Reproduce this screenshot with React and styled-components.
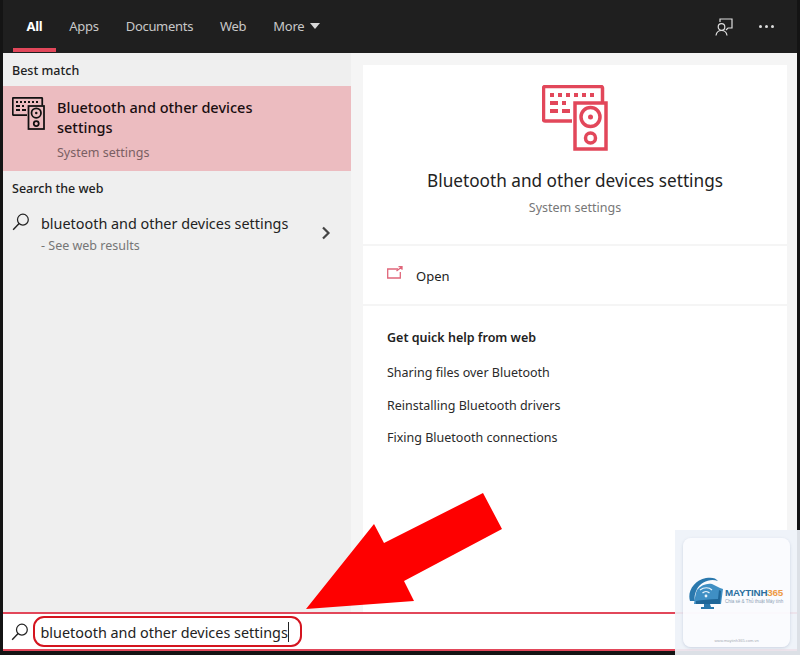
import React from 'react'
import styled, { createGlobalStyle } from 'styled-components'

const GlobalStyle = createGlobalStyle`
  html, body { margin: 0; padding: 0; background: #111; }
  body { font-family: "Noto Sans", "Open Sans", "Liberation Sans", sans-serif; }
`

const Frame = styled.div`
  position: relative;
  width: 800px;
  height: 655px;
  overflow: hidden;
  box-sizing: border-box;
  padding: 0 3px 4px 3px;
  background: #141414;
  display: flex;
  flex-direction: column;
`

const TopBar = styled.div`
  height: 53px;
  flex: none;
  background: #1f1f1f;
  display: flex;
  align-items: stretch;
  padding: 0 0 0 10px;
  color: #d0d0d0;
`

const Tab = styled.div`
  position: relative;
  display: flex;
  align-items: center;
  gap: 6px;
  padding: 0 13.5px 2px;
  font-size: 13px;
  letter-spacing: -0.3px;
  font-weight: ${p => (p.$active ? 700 : 400)};
  color: ${p => (p.$active ? '#fff' : '#c8c8c8')};
  box-sizing: border-box;
  &::after {
    content: "";
    display: ${p => (p.$active ? 'block' : 'none')};
    position: absolute;
    left: 0;
    right: 0;
    bottom: 1px;
    height: 4px;
    background: #e2475a;
  }
`

const Caret = styled.span`
  width: 0;
  height: 0;
  border-left: 5.5px solid transparent;
  border-right: 5.5px solid transparent;
  border-top: 6px solid #d8d8d8;
`

const TopActions = styled.div`
  margin-left: auto;
  display: flex;
  align-items: center;
  gap: 26px;
  padding-right: 23px;
`

const Dots = styled.div`
  display: flex;
  gap: 3px;
  span {
    width: 3px;
    height: 3px;
    border-radius: 50%;
    background: #dcdcdc;
  }
`

const Body = styled.div`
  flex: 1;
  min-height: 0;
  display: flex;
  background: #f5f5f5;
`

const LeftPanel = styled.div`
  width: 348px;
  flex: none;
  background: #efefef;
  color: #1a1a1a;
`

const GroupLabel = styled.div`
  font-size: 12.5px;
  font-weight: 500;
  line-height: 17px;
  color: #222;
  padding-left: 9px;
  padding-top: ${p => p.$top}px;
  padding-bottom: ${p => p.$bottom}px;
`

const BestMatch = styled.div`
  height: 85px;
  box-sizing: border-box;
  background: #ecbcc0;
  display: flex;
  padding: 11px 0 0 9px;
  gap: 12px;
`

const MatchText = styled.div`
  display: flex;
  flex-direction: column;
`

const MatchTitle = styled.div`
  font-size: 14.5px;
  font-weight: 500;
  line-height: 20px;
  color: #1a0e10;
  width: 230px;
`

const MatchSub = styled.div`
  font-size: 12.5px;
  line-height: 17px;
  margin-top: 7px;
  color: #7a5f63;
`

const WebRow = styled.div`
  display: flex;
  padding: 16px 0 0 9px;
  position: relative;
`

const WebText = styled.div`
  margin-left: 11px;
`

const WebTitle = styled.div`
  font-size: 14.4px;
  line-height: 21px;
  color: #222;
`

const WebSub = styled.div`
  font-size: 12.5px;
  line-height: 17px;
  margin-top: 3px;
  color: #767676;
`

const Chevron = styled.div`
  margin-left: auto;
  padding: 10px 20px 0 0;
`

const RightPanel = styled.div`
  flex: 1;
  margin: 12px 10px 0 12px;
  background: #fff;
  display: flex;
  flex-direction: column;
`

const HeroCard = styled.div`
  height: 181px;
  flex: none;
  box-sizing: border-box;
  padding-top: 20px;
  display: flex;
  flex-direction: column;
  align-items: center;
  border-bottom: 2px solid #f5f5f5;
`

const HeroTitle = styled.div`
  font-size: 17.2px;
  line-height: 24px;
  margin-top: 18px;
  color: #222;
`

const HeroSub = styled.div`
  font-size: 12.5px;
  line-height: 17px;
  margin-top: 6px;
  color: #777;
`

const OpenRow = styled.div`
  height: 60px;
  flex: none;
  box-sizing: border-box;
  display: flex;
  align-items: flex-start;
  gap: 13px;
  padding: 21px 0 0 24px;
  font-size: 13px;
  line-height: 18px;
  color: #222;
  border-bottom: 2px solid #f5f5f5;
  svg { margin-top: -1px; }
`

const HelpSection = styled.div`
  padding: 23px 0 0 24px;
  display: flex;
  flex-direction: column;
`

const HelpHead = styled.div`
  font-size: 12.5px;
  font-weight: 600;
  line-height: 17px;
  color: #222;
  margin-bottom: 18px;
`

const HelpLink = styled.div`
  font-size: 12.5px;
  line-height: 17px;
  color: #2a2a2a;
  margin-bottom: 15.5px;
`

const SearchBar = styled.div`
  height: 39px;
  flex: none;
  box-sizing: border-box;
  background: #fff;
  border-top: 2px solid #e2475a;
  border-bottom: 2px solid #e2475a;
  display: flex;
  align-items: center;
  padding-left: 8px;
  gap: 4px;
`

const QueryBox = styled.div`
  width: 269px;
  height: 31px;
  box-sizing: border-box;
  border: 2.5px solid #d4141f;
  border-radius: 11px;
  display: flex;
  align-items: center;
  padding: 1px 0 0 5.5px;
  font-size: 14.4px;
  color: #222;
`

const Cursor = styled.span`
  width: 1px;
  height: 20px;
  background: #222;
`

const Arrow = styled.svg`
  position: absolute;
  left: 0;
  top: 0;
  pointer-events: none;
`

const Watermark = styled.div`
  position: absolute;
  left: 675px;
  top: 530px;
  width: 125px;
  height: 125px;
  box-sizing: border-box;
  padding: 8px 10px 8px 8px;
  background: rgba(238, 242, 248, 0.92);
`

const WatermarkCard = styled.div`
  height: 100%;
  background: rgba(251, 252, 255, 0.85);
  border-radius: 8px;
  box-shadow: 0 1px 3px rgba(120, 135, 170, 0.3);
  display: flex;
  flex-direction: column;
  align-items: center;
  position: relative;
`

const LogoRow = styled.div`
  display: flex;
  align-items: center;
  gap: 2px;
  margin-top: 39px;
  margin-left: -2px;
`

const LogoText = styled.div`
  display: flex;
  flex-direction: column;
  margin-top: 5px;
  width: 58px;
`

const LogoName = styled.div`
  font-family: "Liberation Sans", sans-serif;
  font-size: 9.8px;
  font-weight: 700;
  line-height: 11px;
  color: #2a6f9e;
  letter-spacing: -0.2px;
  white-space: nowrap;
  span { color: #ee9a45; }
`

const LogoTag = styled.div`
  font-family: "Liberation Sans", sans-serif;
  font-size: 4.5px;
  line-height: 7px;
  color: #8aa0b4;
  white-space: nowrap;
`

const LogoUrl = styled.div`
  position: absolute;
  bottom: 4px;
  font-family: "Liberation Sans", sans-serif;
  font-size: 4px;
  color: #a8adb5;
`

const SearchGlass = ({ size = 19 }) => (
  <svg width={size} height={size} viewBox="0 0 19 19" fill="none" stroke="#222" strokeWidth="1.3">
    <circle cx="11.5" cy="7" r="5.7" />
    <path d="M7.5 11.2 1.2 17.8" strokeWidth="1.5" />
  </svg>
)

const DeviceGlyph = ({ color, sw }) => (
  <g fill="none" stroke={color} strokeWidth={sw}>
    <path d="M30 36H3a1.5 1.5 0 0 1-1.500-1.500V3A1.500 1.500 0 0 1 3 1.500h56a1.500 1.500 0 0 1 1.500 1.500v14" />
    <rect x="33" y="18" width="31" height="46" />
    <circle cx="48.500" cy="32" r="9.500" />
    <circle cx="48.500" cy="53" r="5" />
    <g fill={color} stroke="none">
      <circle cx="48.500" cy="32" r="2.500" />
      <rect x="8" y="8" width="4" height="4" />
      <rect x="16" y="8" width="4" height="4" />
      <rect x="24" y="8" width="4" height="4" />
      <rect x="32" y="8" width="4" height="4" />
      <rect x="40" y="8" width="4" height="4" />
      <rect x="48" y="8" width="4" height="4" />
      <rect x="8" y="16" width="8" height="4" />
      <rect x="20" y="16" width="4" height="4" />
      <rect x="8" y="24" width="8" height="4" />
      <rect x="20" y="24" width="8" height="4" />
    </g>
  </g>
)

export default function App() {
  return (
    <>
      <GlobalStyle />
      <Frame>
        <TopBar>
          <Tab $active>All</Tab>
          <Tab>Apps</Tab>
          <Tab>Documents</Tab>
          <Tab>Web</Tab>
          <Tab>More <Caret /></Tab>
          <TopActions>
            <svg width="18" height="18" viewBox="0 0 18 18" fill="none" stroke="#dedede" strokeWidth="1.2">
              <path d="M5 4V1h12v9h-4l-2 2" />
              <circle cx="6.500" cy="9" r="3.300" />
              <path d="M1 17.500c.5-3.500 2.500-5 5.500-5s5 1.500 5.500 5" />
            </svg>
            <Dots><span /><span /><span /></Dots>
          </TopActions>
        </TopBar>
        <Body>
          <LeftPanel>
            <GroupLabel $top={9} $bottom={7}>Best match</GroupLabel>
            <BestMatch>
              <svg width="33" height="33" viewBox="0 0 66 66">
                <DeviceGlyph color="#111" sw="3.500" />
              </svg>
              <MatchText>
                <MatchTitle>Bluetooth and other devices settings</MatchTitle>
                <MatchSub>System settings</MatchSub>
              </MatchText>
            </BestMatch>
            <GroupLabel $top={9} $bottom={0}>Search the web</GroupLabel>
            <WebRow>
              <SearchGlass size={18} />
              <WebText>
                <WebTitle>bluetooth and other devices settings</WebTitle>
                <WebSub>- See web results</WebSub>
              </WebText>
              <Chevron>
                <svg width="10" height="14" viewBox="0 0 10 14" fill="none" stroke="#444" strokeWidth="2.200">
                  <path d="M2 1.500 7.500 7 2 12.500" />
                </svg>
              </Chevron>
            </WebRow>
          </LeftPanel>
          <RightPanel>
            <HeroCard>
              <svg width="66" height="66" viewBox="0 0 66 66">
                <DeviceGlyph color="#e2475a" sw="3.500" />
              </svg>
              <HeroTitle>Bluetooth and other devices settings</HeroTitle>
              <HeroSub>System settings</HeroSub>
            </HeroCard>
            <OpenRow>
              <svg width="16" height="13" viewBox="0 0 16 13" fill="none" stroke="#e0667a" strokeWidth="1.300">
                <path d="M11 3H.7v9h12.600V6" />
                <path d="M9.500 5 15 .7M11.500.7H15v3" />
              </svg>
              Open
            </OpenRow>
            <HelpSection>
              <HelpHead>Get quick help from web</HelpHead>
              <HelpLink>Sharing files over Bluetooth</HelpLink>
              <HelpLink>Reinstalling Bluetooth drivers</HelpLink>
              <HelpLink>Fixing Bluetooth connections</HelpLink>
            </HelpSection>
          </RightPanel>
        </Body>
        <SearchBar>
          <SearchGlass size={18} />
          <QueryBox>bluetooth and other devices settings<Cursor /></QueryBox>
        </SearchBar>
        <Arrow width="800" height="655" viewBox="0 0 800 655">
          <polygon points="306,609 374,524 384,543 483,493 502,529 404,581 414,601" fill="#fe0000" />
        </Arrow>
        <Watermark>
          <WatermarkCard>
            <LogoRow>
              <svg width="35" height="33" viewBox="0 0 35 33">
                <path d="M2 24C-1 15 6 3 18 1c6-1 10 0 12 3-8-3-17 1-21 8-2 4-3 8-2 12z" fill="#2a78ad" />
                <path d="M9 13c4-5 10-7 15-6l8 4 3 1-2 15H6c1-5 1-10 3-14z" fill="#3f8fc4" />
                <path d="M8 24c6-1 14-2 22-2l1-9 2 1-1 13H8z" fill="#1f6698" />
                <path d="M16 27h6l1 3h3v2H13v-2h3z" fill="#2a78ad" />
                <g fill="none" stroke="#e8f3fb" strokeWidth="1.200">
                  <path d="M12 13c4-3 9-3 12 0M14.500 16c2-2 5-2 7 0" />
                </g>
                <circle cx="18" cy="19" r="1.400" fill="#e8f3fb" />
              </svg>
              <LogoText>
                <LogoName>MAYTINH<span>365</span></LogoName>
                <LogoTag>Chia sẻ &amp; Thủ thuật Máy tính</LogoTag>
              </LogoText>
            </LogoRow>
            <LogoUrl>www.maytinh365.com.vn</LogoUrl>
          </WatermarkCard>
        </Watermark>
      </Frame>
    </>
  )
}
